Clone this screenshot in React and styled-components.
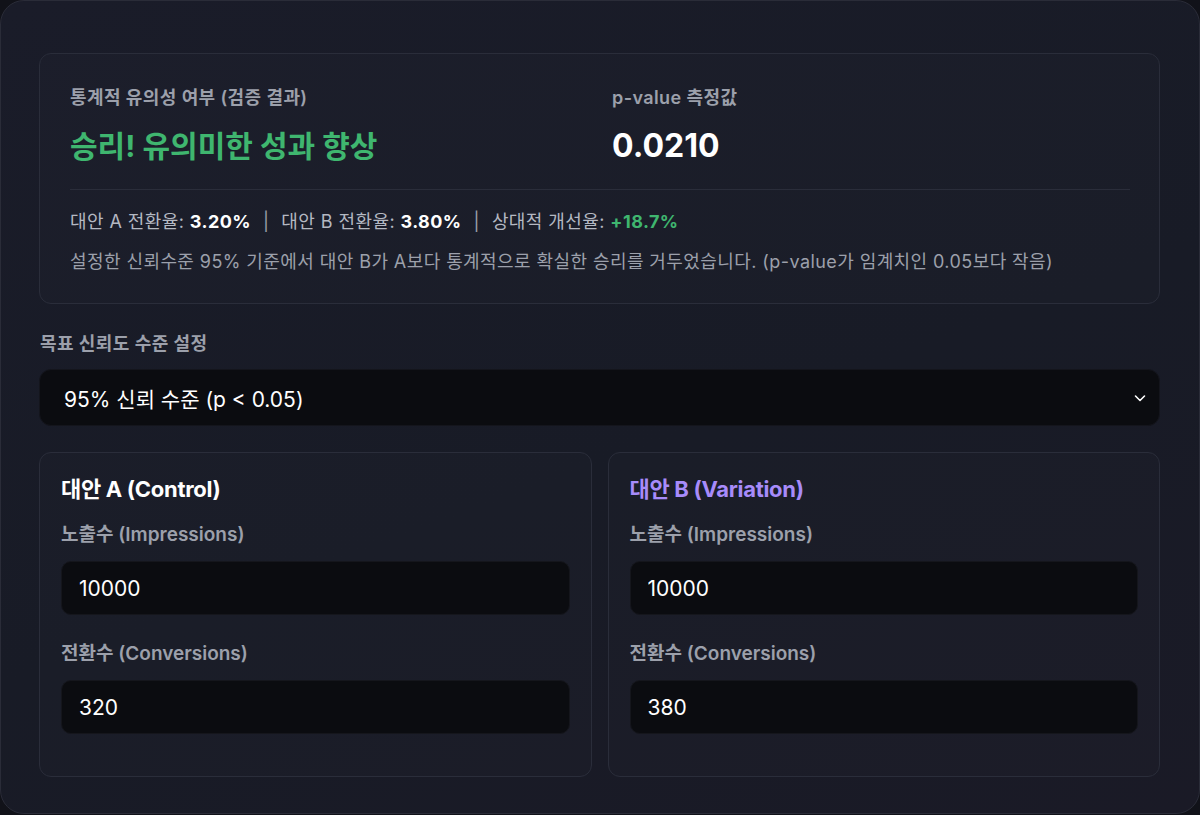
import React, { useState } from "react";
import styled, { createGlobalStyle } from "styled-components";

const GlobalStyle = createGlobalStyle`
  * { box-sizing: border-box; }
  body {
    margin: 0;
    background: #111219;
    font-family: "Inter", "Noto Sans CJK KR", sans-serif;
    color: #fff;
  }
`;

const COLOR = {
  border: "#2a2d3a",
  muted: "#9ca0ab",
  text: "#b4b8c2",
  green: "#3fb66f",
  purple: "#a78bfa",
  field: "#0b0c10",
};

const Shell = styled.div`
  width: 1200px;
  height: 814px;
  border: 1px solid #2a2c38;
  border-radius: 24px;
  background: linear-gradient(160deg, #1a1c29 0%, #181b26 55%, #1a1a26 100%);
  padding: 52px 39px 0 38px;
  overflow: hidden;
`;

const ResultCard = styled.section`
  border: 1px solid ${COLOR.border};
  border-radius: 12px;
  background: rgba(255, 255, 255, 0.012);
  padding: 32px 29px 29px 30px;
`;

const ResultGrid = styled.div`
  display: grid;
  grid-template-columns: 1fr 1fr;
  gap: 24px;
  padding-bottom: 25px;
  border-bottom: 1px solid ${COLOR.border};
`;

const Caption = styled.div`
  font-size: 18px;
  line-height: 24px;
  font-weight: 600;
  letter-spacing: 0.4px;
  color: ${COLOR.muted};
  margin-bottom: 18px;
`;

const Verdict = styled.div`
  line-height: 36px;
  font-weight: 700;
  color: ${(p) => p.$color || "#fff"};
  font-size: ${(p) => p.$size || 30}px;
`;

const Summary = styled.div`
  padding-top: 20px;
  display: flex;
  flex-direction: column;
  gap: 16px;
`;

const Line = styled.p`
  margin: 0;
  font-size: 18px;
  line-height: 24px;
  letter-spacing: 0.42px;
  color: ${(p) => (p.$dim ? COLOR.muted : COLOR.text)};
`;

const Value = styled.b`
  color: ${(p) => p.$color || "#fff"};
  font-weight: 700;
`;

const Sep = styled.span`
  margin: 0 12px;
  color: ${COLOR.muted};
`;

const SectionLabel = styled.label`
  display: block;
  margin: 28px 0 13px 1px;
  font-size: 18px;
  line-height: 24px;
  font-weight: 600;
  letter-spacing: 0.4px;
  color: ${COLOR.muted};
`;

const SelectBox = styled.div`
  height: 57px;
  border-radius: 12px;
  background: ${COLOR.field};
  border: 1px solid #14151c;
  display: flex;
  align-items: center;
  padding: 0 24px;
  font-size: 21px;
  color: #fff;
`;

const Chevron = styled.svg`
  margin-left: auto;
  margin-right: -12px;
  width: 14px;
  height: 14px;
`;

const Variants = styled.div`
  margin-top: 26px;
  display: grid;
  grid-template-columns: 1fr 1fr;
  gap: 16px;
`;

const VariantCard = styled.div`
  border: 1px solid ${COLOR.border};
  border-radius: 12px;
  background: rgba(255, 255, 255, 0.012);
  padding: 22px 21px 42px 21px;
  display: flex;
  flex-direction: column;
`;

const VariantTitle = styled.h3`
  margin: 0 0 19px;
  font-size: 22px;
  line-height: 28px;
  font-weight: 700;
  letter-spacing: -0.3px;
  color: ${(p) => p.$color};
`;

const Field = styled.div`
  display: flex;
  flex-direction: column;
  & + & {
    margin-top: 26px;
  }
`;

const FieldLabel = styled.label`
  font-size: 19px;
  line-height: 26px;
  font-weight: 600;
  color: ${COLOR.muted};
  margin-bottom: 13px;
`;

const NumberInput = styled.input`
  height: 54px;
  flex-shrink: 0;
  border-radius: 10px;
  border: 1px solid #15161c;
  background: ${COLOR.field};
  color: #fff;
  font-family: inherit;
  font-size: 21px;
  padding: 0 17px;
  outline: none;
`;

function Variant({ title, color, impressions, conversions }) {
  const [imp, setImp] = useState(impressions);
  const [conv, setConv] = useState(conversions);
  return (
    <VariantCard>
      <VariantTitle $color={color}>{title}</VariantTitle>
      <Field>
        <FieldLabel>노출수 (Impressions)</FieldLabel>
        <NumberInput value={imp} onChange={(e) => setImp(e.target.value)} />
      </Field>
      <Field>
        <FieldLabel>전환수 (Conversions)</FieldLabel>
        <NumberInput value={conv} onChange={(e) => setConv(e.target.value)} />
      </Field>
    </VariantCard>
  );
}

export default function App() {
  return (
    <>
      <GlobalStyle />
      <Shell>
        <ResultCard>
          <ResultGrid>
            <div>
              <Caption>통계적 유의성 여부 (검증 결과)</Caption>
              <Verdict $color={COLOR.green}>승리! 유의미한 성과 향상</Verdict>
            </div>
            <div>
              <Caption>p-value 측정값</Caption>
              <Verdict $size={32}>0.0210</Verdict>
            </div>
          </ResultGrid>
          <Summary>
            <Line>
              대안 A 전환율: <Value>3.20%</Value>
              <Sep>|</Sep>
              대안 B 전환율: <Value>3.80%</Value>
              <Sep>|</Sep>
              상대적 개선율: <Value $color={COLOR.green}>+18.7%</Value>
            </Line>
            <Line $dim>
              설정한 신뢰수준 95% 기준에서 대안 B가 A보다 통계적으로 확실한 승리를 거두었습니다. (p-value가 임계치인 0.05보다 작음)
            </Line>
          </Summary>
        </ResultCard>

        <SectionLabel>목표 신뢰도 수준 설정</SectionLabel>
        <SelectBox>
          95% 신뢰 수준 (p &lt; 0.05)
          <Chevron viewBox="0 0 14 14" fill="none">
            <path d="M2.5 5l4.5 4.5L11.5 5" stroke="#fff" strokeWidth="1.6" strokeLinecap="round" strokeLinejoin="round" />
          </Chevron>
        </SelectBox>

        <Variants>
          <Variant title="대안 A (Control)" color="#fff" impressions="10000" conversions="320" />
          <Variant title="대안 B (Variation)" color={COLOR.purple} impressions="10000" conversions="380" />
        </Variants>
      </Shell>
    </>
  );
}
